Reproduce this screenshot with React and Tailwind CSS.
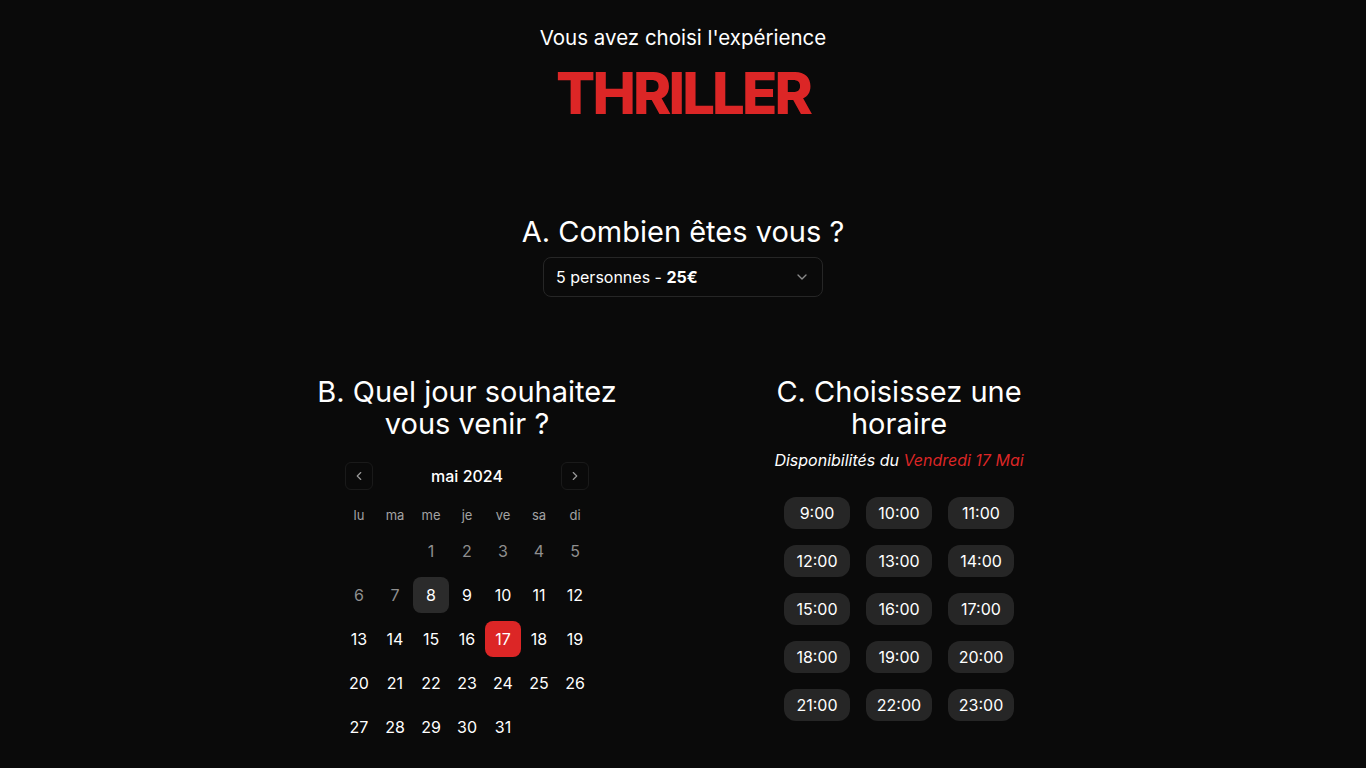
import { ChevronDown, ChevronLeft, ChevronRight } from 'lucide-react'

const WEEKDAYS = ['lu', 'ma', 'me', 'je', 've', 'sa', 'di']
const HOURS = ['9:00', '10:00', '11:00', '12:00', '13:00', '14:00', '15:00', '16:00', '17:00', '18:00', '19:00', '20:00', '21:00', '22:00', '23:00']

// mai 2024 starts on a wednesday
const CELLS = [null, null, ...Array.from({ length: 31 }, (_, i) => i + 1)]

function Day({ day }) {
  if (!day) return <div className="w-9 h-9" />
  let cls = 'text-white'
  if (day < 8) cls = 'text-[#8f8f8f]'
  if (day === 8) cls = 'bg-[#2b2b2b] text-white'
  if (day === 17) cls = 'bg-[#dc2626] text-white'
  return (
    <button className={`w-9 h-9 rounded-lg flex items-center justify-center text-base ${cls}`}>
      {day}
    </button>
  )
}

function Calendar() {
  return (
    <div className="w-[252px] mt-[22px]">
      {/* Month nav */}
      <div className="flex items-center justify-between px-1">
        <button className="w-7 h-7 rounded-md border border-[#1a1a1a] flex items-center justify-center text-[#9a9a9a]">
          <ChevronLeft size={14} />
        </button>
        <span className="text-base font-medium">mai 2024</span>
        <button className="w-7 h-7 rounded-md border border-[#1a1a1a] flex items-center justify-center text-[#9a9a9a]">
          <ChevronRight size={14} />
        </button>
      </div>

      {/* Weekdays */}
      <div className="grid grid-cols-7 mt-[15px]">
        {WEEKDAYS.map((d) => (
          <span key={d} className="text-center text-[13px] leading-5 text-[#a3a3a3]">{d}</span>
        ))}
      </div>

      {/* Days */}
      <div className="grid grid-cols-7 gap-y-2 mt-2">
        {CELLS.map((d, i) => (
          <Day key={i} day={d} />
        ))}
      </div>
    </div>
  )
}

export default function App() {
  return (
    <div className="min-h-screen bg-[#0a0a0a] text-white font-['Inter',sans-serif] flex flex-col items-center pt-6 pb-10">
      <p className="text-[20.5px] leading-7">Vous avez choisi l'expérience</p>
      <h1 className="mt-3 text-[58px] leading-none font-extrabold tracking-tighter text-[#dc2626]">THRILLER</h1>

      {/* Section A */}
      <h2 className="mt-[94px] text-[29px] leading-8">A. Combien êtes vous ?</h2>
      <button className="mt-[9px] w-[280px] h-10 rounded-lg border border-[#262626] flex items-center justify-between pl-3 pr-3 text-base">
        <span>
          5 personnes - <span className="font-bold">25€</span>
        </span>
        <ChevronDown size={16} className="text-[#8a8a8a]" />
      </button>

      <div className="mt-[79px] flex justify-center gap-[112px]">
        {/* Section B */}
        <div className="w-80 flex flex-col items-center">
          <h2 className="text-[29px] leading-8 text-center">B. Quel jour souhaitez vous venir ?</h2>
          <Calendar />
        </div>

        {/* Section C */}
        <div className="w-80 flex flex-col items-center">
          <h2 className="text-[29px] leading-8 text-center">C. Choisissez une horaire</h2>
          <p className="mt-2 text-base leading-6 italic">
            Disponibilités du <span className="text-[#dc2626]">Vendredi 17 Mai</span>
          </p>
          <div className="mt-[25px] grid grid-cols-3 gap-x-4 gap-y-4">
            {HOURS.map((h) => (
              <button key={h} className="w-[66px] h-8 rounded-xl bg-[#262626] text-base flex items-center justify-center">
                {h}
              </button>
            ))}
          </div>
        </div>
      </div>
    </div>
  )
}
